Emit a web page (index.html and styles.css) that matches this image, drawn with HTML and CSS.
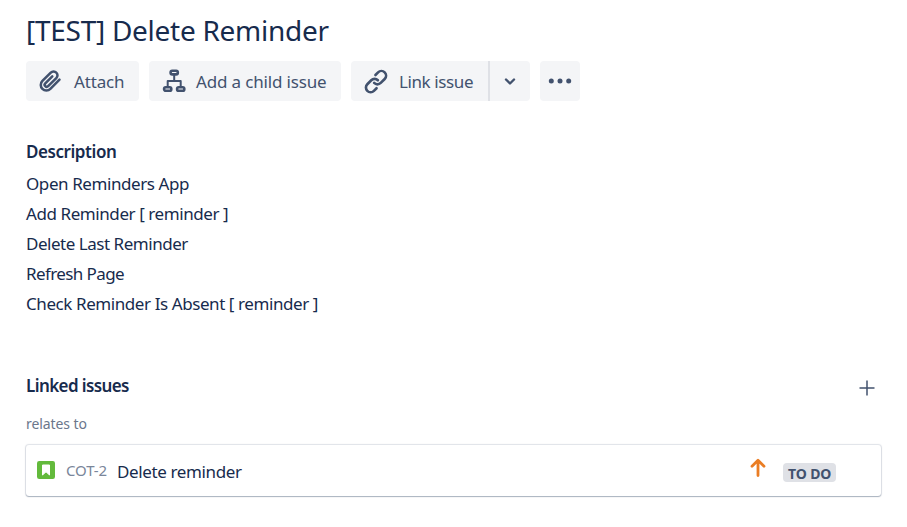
FILE: index.html
```html
<!DOCTYPE html>
<html lang="en">
<head>
<meta charset="utf-8">
<title>[TEST] Delete Reminder</title>
<link rel="stylesheet" href="styles.css">
</head>
<body>
<main class="issue">
  <h1 class="title">[TEST] Delete Reminder</h1>
  <div class="toolbar">
    <button class="btn btn-attach">
      <svg class="icon" width="24" height="24" viewBox="0 0 24 24"><path transform="translate(-1.200 -1.400) scale(1.060)" d="M21.400 11.300 12.800 20a5.200 5.200 0 0 1-7.500 0 5.200 5.200 0 0 1 0-7.400l7.900-7.900a3.600 3.600 0 0 1 5.200 0 3.600 3.600 0 0 1 0 5.200l-7.700 7.600a1.900 1.900 0 0 1-2.700-2.700l6.600-6.600"/></svg>
      <span class="label">Attach</span>
    </button>
    <button class="btn btn-child">
      <svg class="icon" width="24" height="24" viewBox="0 0 24 24"><rect x="9.600" y="1.800" width="7.200" height="3.600" rx="1.600"/><rect x="3.100" y="18.200" width="7.200" height="3.600" rx="1.600"/><rect x="16.100" y="18.200" width="7.200" height="3.600" rx="1.600"/><path class="thin" d="M13.200 6v6M6.700 18v-6h13v6"/></svg>
      <span class="label">Add a child issue</span>
    </button>
    <div class="split">
      <button class="btn btn-link">
        <svg class="icon" width="24" height="24" viewBox="0 0 24 24"><path transform="translate(-.200 -.600) scale(1.100)" d="m11.500 6 2.400-2.400a4.200 4.200 0 0 1 6 6L16.300 13.200a4.200 4.200 0 0 1-6 0M12.500 18l-2.400 2.400a4.200 4.200 0 0 1-6-6L7.700 10.800a4.200 4.200 0 0 1 6 0"/></svg>
        <span class="label">Link issue</span>
      </button>
      <button class="btn btn-caret" aria-label="Link options">
        <svg class="icon" width="14" height="10" viewBox="0 0 14 10"><path d="m3 3.500 4 4 4-4"/></svg>
      </button>
    </div>
    <button class="btn btn-more" aria-label="More">
      <svg width="24" height="8" viewBox="0 0 24 8"><circle cx="3.300" cy="4" r="2.500"/><circle cx="12" cy="4" r="2.500"/><circle cx="20.700" cy="4" r="2.500"/></svg>
    </button>
  </div>
  <section class="description">
    <h2 class="heading">Description</h2>
    <div class="steps">
      <p>Open Reminders App</p>
      <p>Add Reminder [ reminder ]</p>
      <p class="snug">Delete Last Reminder</p>
      <p class="tight">Refresh Page</p>
      <p>Check Reminder Is Absent [ reminder ]</p>
    </div>
  </section>
  <section class="linked">
    <header class="linked-head">
      <h2 class="heading">Linked issues</h2>
      <svg class="plus" width="18" height="18" viewBox="0 0 18 18"><path d="M9 1.500v15M1.500 9h15"/></svg>
    </header>
    <div class="relation">relates to</div>
    <div class="card">
      <svg class="story" width="18" height="18" viewBox="0 0 18 18"><rect width="18" height="18" rx="2.200" fill="#63ba3c"/><path d="M5.500 4h7v10L9 10.800 5.500 14z" fill="#fff" stroke="#fff" stroke-width="1" stroke-linejoin="round"/></svg>
      <span class="key">COT-2</span>
      <span class="summary">Delete reminder</span>
      <svg class="priority" width="16" height="20" viewBox="0 0 16 20"><path d="M8 17.500V2.500M2 8.200l6-6 6 6"/></svg>
      <span class="status">TO DO</span>
    </div>
  </section>
</main>
</body>
</html>
```
FILE: styles.css
```css
* { box-sizing: border-box; }
body {
  margin: 0;
  background: #fff;
  color: #172b4d;
  font: 17px/30px "Noto Sans", sans-serif;
}
h1, h2, p { margin: 0; white-space: nowrap; }
.issue { min-height: 527px; padding: 10px 26px 0 26px; }
.title { height: 51px; font-size: 28px; line-height: 40px; font-weight: 400; letter-spacing: -.27px; }
.toolbar { display: flex; gap: 10px; height: 40px; }
.btn {
  display: flex;
  align-items: center;
  height: 40px;
  padding: 0 0 0 12px;
  border: 0;
  border-radius: 4px;
  background: #f4f5f7;
  color: #42526e;
  font: inherit;
  white-space: nowrap;
}
.icon { flex: none; overflow: visible; fill: none; stroke: #42526e; stroke-width: 2.400; stroke-linecap: round; stroke-linejoin: round; }
.icon .thin { stroke-width: 2; }
.label { margin-left: 11px; padding-top: 1px; letter-spacing: -.16px; }
.btn-attach { width: 113px; }
.btn-attach .label { margin-left: 12px; }
.btn-child { width: 192px; }
.btn-child .icon { stroke-width: 2.600; }
.split { display: flex; }
.btn-link { width: 137px; border-radius: 4px 0 0 4px; }
.btn-link .label { margin-left: 12px; letter-spacing: -.4px; }
.btn-caret { width: 42px; padding: 0; justify-content: center; border-left: 2px solid #dfe1e6; border-radius: 0 4px 4px 0; }
.btn-more { width: 40px; padding: 0; justify-content: center; fill: #42526e; }
.description { padding-top: 36px; }
.steps { padding-top: 2px; letter-spacing: -.42px; }
.snug { letter-spacing: -.47px; }
.tight { letter-spacing: -.6px; }
.heading { font-size: 17px; line-height: 30px; font-weight: 600; letter-spacing: -.44px; }
.linked { padding-top: 52px; }
.linked .heading { letter-spacing: -.6px; }
.linked-head { display: flex; justify-content: space-between; align-items: flex-end; height: 30px; padding-right: 5px; }
.plus { margin-bottom: 4px; fill: none; stroke: #42526e; stroke-width: 1.500; }
.relation { color: #6b778c; font-size: 14px; line-height: 30px; padding-top: 8px; letter-spacing: -.08px; }
.card {
  display: flex;
  align-items: center;
  height: 51px;
  margin-top: 6px;
  padding-left: 11px;
  border-radius: 3px;
  box-shadow: 0 1px 1px rgba(9,30,66,.25), 0 0 1px 1px rgba(9,30,66,.13);
}
.story { margin-bottom: 2px; }
.key { margin: 0 0 2px 11px; color: #7a869a; font-size: 15px; letter-spacing: -.12px; }
.summary { margin: 2px 0 0 10px; letter-spacing: -.37px; }
.priority { margin: 0 0 5px auto; fill: none; stroke: #ea7d24; stroke-width: 2.800; stroke-linecap: round; stroke-linejoin: round; }
.status { width: 53px; height: 19px; margin: 4px 45px 0 17px; padding-left: 5px; border-radius: 4px; background: #dfe1e6; color: #42526e; font-size: 14px; font-weight: 700; line-height: 21px; letter-spacing: -.1px; }
```
